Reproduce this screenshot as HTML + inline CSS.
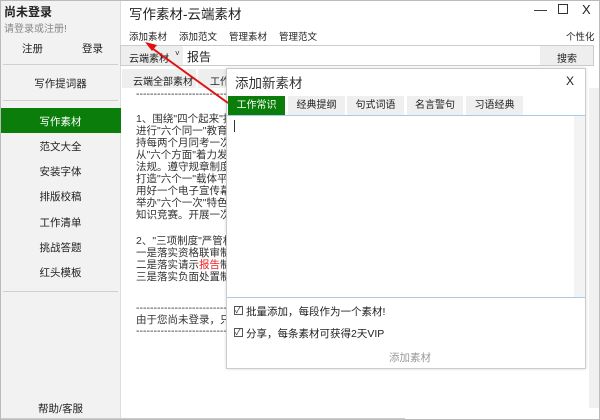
<!DOCTYPE html>
<html><head><meta charset="utf-8"><style>
*{margin:0;padding:0;box-sizing:border-box}
body{width:600px;height:420px;overflow:hidden;font-family:"Liberation Sans","Noto Sans CJK SC",sans-serif;font-size:11px;color:#222;background:#fff;position:relative}
.a{position:absolute;white-space:nowrap}
.side{position:absolute;left:0;top:0;width:121px;height:420px;background:#f2f2f2;border-right:1px solid #ddd}
.sep{position:absolute;left:3px;width:115px;height:1px;background:#d0d0d0}
.c{position:absolute;left:0;width:121px;text-align:center;font-size:10.5px}
.tab{position:absolute;top:95px;height:19px;background:#efefef;text-align:center;line-height:19px;font-size:10px}
.txt{position:absolute;left:136px;font-size:10.5px;line-height:12px;color:#333;white-space:nowrap;width:90px;overflow:hidden}
.tb{position:absolute;top:29px;font-size:9.5px;white-space:nowrap}
</style></head><body>
<div class="side">
<div class="a" style="left:4px;top:3px;font-weight:bold;font-size:12px">尚未登录</div>
<div class="a" style="left:4px;top:20px;color:#888;font-size:10px">请登录或注册!</div>
<div class="a" style="left:22px;top:41px;font-size:10.5px">注册</div>
<div class="a" style="left:82px;top:41px;font-size:10.5px">登录</div>
<div class="sep" style="top:64px"></div>
<div class="c" style="top:76px">写作提词器</div>
<div class="sep" style="top:100px"></div>
<div style="position:absolute;left:0;top:108px;width:121px;height:25px;background:#0a7d0a"></div>
<div class="c" style="top:114px;color:#fff">写作素材</div>
<div class="c" style="top:139px">范文大全</div>
<div class="c" style="top:164px">安装字体</div>
<div class="c" style="top:189px">排版校稿</div>
<div class="c" style="top:215px">工作清单</div>
<div class="c" style="top:240px">挑战答题</div>
<div class="c" style="top:265px">红头模板</div>
<div class="sep" style="top:291px"></div>
<div class="c" style="top:401px">帮助/客服</div>
</div>
<div class="a" style="left:129px;top:3px;font-size:13.5px">写作素材-云端素材</div>
<div class="a" style="left:534px;top:2px;font-size:13px">—</div>
<div class="a" style="left:558px;top:4px;width:10px;height:10px;border:1.5px solid #333"></div>
<div class="a" style="left:582px;top:2px;font-size:13px">X</div>
<div class="tb" style="left:129px">添加素材</div>
<div class="tb" style="left:179px">添加范文</div>
<div class="tb" style="left:229px">管理素材</div>
<div class="tb" style="left:279px">管理范文</div>
<div class="tb" style="left:566px">个性化</div>
<div class="a" style="left:120px;top:45px;width:474px;height:21px;border:1px solid #ccc;background:#fff"></div>
<div class="a" style="left:121px;top:46px;width:62px;height:19px;background:#eee"></div>
<div class="a" style="left:129px;top:50px;font-size:10px">云端素材</div>
<div class="a" style="left:175px;top:49px;font-size:8px">˅</div>
<div class="a" style="left:187px;top:48px;font-size:12px">报告</div>
<div class="a" style="left:540px;top:46px;width:53px;height:19px;background:#eee"></div>
<div class="a" style="left:557px;top:50px;font-size:10px">搜索</div>
<div class="a" style="left:122px;top:69px;width:74px;height:19px;background:#eee"></div>
<div class="a" style="left:133px;top:73px;font-size:10px">云端全部素材</div>
<div class="a" style="left:198px;top:69px;width:30px;height:19px;background:#eee"></div>
<div class="a" style="left:210px;top:73px;font-size:10px">工作</div>
<div class="a" style="left:589px;top:88px;width:11px;height:320px;background:#f0f0f0"></div>
<div class="txt" style="top:88px">--------------------------------</div>
<div class="txt" style="top:113px">1、围绕"四个起来"打造</div>
<div class="txt" style="top:125px">进行"六个同一"教育引导</div>
<div class="txt" style="top:137px">持每两个月同考一次试。</div>
<div class="txt" style="top:149px">从"六个方面"着力发力，</div>
<div class="txt" style="top:161px">法规。遵守规章制度。</div>
<div class="txt" style="top:173px">打造"六个一"载体平台，</div>
<div class="txt" style="top:185px">用好一个电子宣传幕墙。</div>
<div class="txt" style="top:197px">举办"六个一次"特色活动</div>
<div class="txt" style="top:209px">知识竞赛。开展一次演讲</div>
<div class="txt" style="top:235px">2、"三项制度"严管村干部</div>
<div class="txt" style="top:247px">一是落实资格联审制度，</div>
<div class="txt" style="top:259px">二是落实请示<span style="color:#e22">报告</span>制度，</div>
<div class="txt" style="top:271px">三是落实负面处置制度，</div>
<div class="txt" style="top:302px">--------------------------------</div>
<div class="txt" style="top:314px">由于您尚未登录，只能显</div>
<div class="txt" style="top:325px">--------------------------------</div>
<div class="a" style="left:0;top:418px;width:405px;height:2px;background:#ccc"></div>
<div class="a" style="left:0;top:0;width:600px;height:420px;border:1px solid #bbb;pointer-events:none"></div>
<div class="a" style="left:226px;top:68px;width:360px;height:301px;background:#fff;border:1px solid #ccc;box-shadow:0 0 3px rgba(0,0,0,.15)">
<div class="a" style="left:8px;top:3px;font-size:13.5px;color:#333">添加新素材</div>
<div class="a" style="left:339px;top:5px;font-size:12px">X</div>
<div class="tab" style="left:1px;width:57px;background:#0a7d0a;color:#fff;top:27px">工作常识</div>
<div class="tab" style="left:61px;width:57px;top:27px">经典提纲</div>
<div class="tab" style="left:120px;width:57px;top:27px">句式词语</div>
<div class="tab" style="left:180px;width:56px;top:27px">名言警句</div>
<div class="tab" style="left:239px;width:57px;top:27px">习语经典</div>
<div class="a" style="left:0;top:46px;width:358px;height:1px;background:#a8cbe8"></div>
<div class="a" style="left:7px;top:51px;width:1px;height:12px;background:#333"></div>
<div class="a" style="left:347px;top:47px;width:11px;height:181px;background:#f3f3f3"></div>
<div class="a" style="left:0;top:228px;width:358px;height:1px;background:#a8cbe8"></div>
<div class="a" style="left:7px;top:237px;width:9px;height:9px;border:1px solid #555;font-size:8px;line-height:7px">✓</div>
<div class="a" style="left:19px;top:235px;font-size:10.5px">批量添加，每段作为一个素材!</div>
<div class="a" style="left:7px;top:259px;width:9px;height:9px;border:1px solid #555;font-size:8px;line-height:7px">✓</div>
<div class="a" style="left:19px;top:257px;font-size:10.5px">分享，每条素材可获得2天VIP</div>
<div class="a" style="left:162px;top:281px;font-size:10.5px;color:#999">添加素材</div>
</div>
<svg class="a" style="left:0;top:0" width="600" height="420"><line x1="228" y1="103" x2="149" y2="46" stroke="#e01010" stroke-width="2"/><polygon points="145,42 157,45 152,51" fill="#e01010"/></svg>
</body></html>
